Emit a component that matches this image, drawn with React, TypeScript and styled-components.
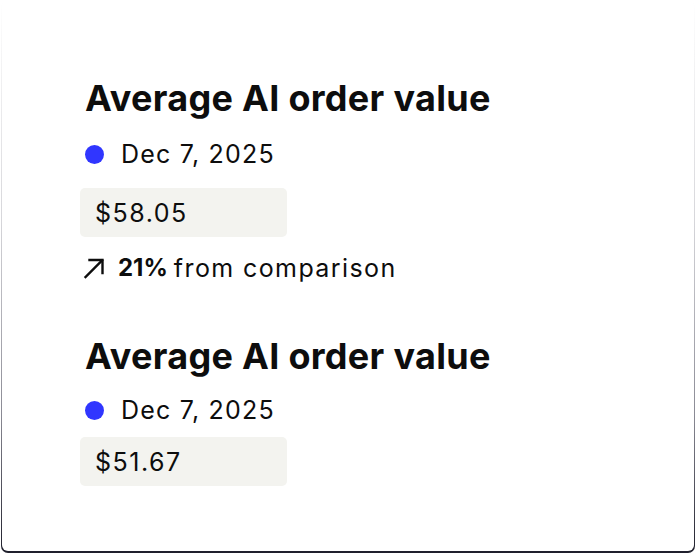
import React from "react";
import styled, { createGlobalStyle } from "styled-components";

const Global = createGlobalStyle`
  html, body { margin: 0; padding: 0; background: #ffffff; }
  body { font-family: Inter, "Noto Sans", sans-serif; color: #0d0d0d; }
`;

const Frame = styled.div`
  box-sizing: border-box;
  margin-left: 1px;
  width: 694px;
  height: 553px;
  padding: 0 1px 2px 1px;
  border-radius: 7px;
  background: linear-gradient(180deg, #ffffff 0%, #d6d6da 40%, #8a8a94 75%, #1f1f2c 100%);
`;

const Card = styled.div`
  box-sizing: border-box;
  height: 100%;
  background: #ffffff;
  border-radius: 6px;
  padding: 78px 0 0 83px;
  display: flex;
  flex-direction: column;
`;

const Block = styled.section<{ $gap?: number }>`
  display: flex;
  flex-direction: column;
  margin-bottom: ${(p) => p.$gap ?? 0}px;
`;

const Title = styled.h2`
  margin: 0;
  font-size: 36px;
  line-height: 40px;
  font-weight: 700;
  letter-spacing: 0.3px;
`;

const DateRow = styled.div<{ $top: number }>`
  display: flex;
  align-items: center;
  gap: 17px;
  margin-top: ${(p) => p.$top}px;
  font-size: 25px;
  line-height: 30px;
  letter-spacing: 1.2px;
`;

const Dot = styled.span`
  width: 19px;
  height: 19px;
  border-radius: 50%;
  background: #3036ff;
  flex: none;
`;

const ValueBox = styled.div<{ $top: number }>`
  box-sizing: border-box;
  margin-top: ${(p) => p.$top}px;
  margin-left: -5px;
  width: 207px;
  height: 49px;
  border-radius: 5px;
  background: #f3f3ef;
  padding-left: 15px;
  display: flex;
  align-items: center;
  font-size: 25px;
  letter-spacing: 1.5px;
`;

const Trend = styled.div`
  display: flex;
  align-items: center;
  margin-top: 16px;
  font-size: 25px;
  line-height: 30px;
  letter-spacing: 1.4px;
`;

const Arrow = styled.svg`
  width: 24px;
  height: 24px;
  margin-left: -3px;
  margin-right: 12px;
  flex: none;
`;

const Strong = styled.strong`
  font-weight: 700;
  font-size: 24px;
  letter-spacing: 0;
  margin-right: 6px;
`;

export default function App() {
  return (
    <>
      <Global />
      <Frame>
        <Card>
          <Block $gap={53}>
            <Title>Average AI order value</Title>
            <DateRow $top={21}>
              <Dot />
              <span>Dec 7, 2025</span>
            </DateRow>
            <ValueBox $top={19}>$58.05</ValueBox>
            <Trend>
              <Arrow viewBox="0 0 24 24" fill="none" stroke="#0d0d0d" strokeWidth="2.4" strokeLinecap="square">
                <path d="M3.5 21 L20 4.5" />
                <path d="M7.5 4 H20.5 V17" />
              </Arrow>
              <Strong>21%</Strong>
              <span>from comparison</span>
            </Trend>
          </Block>
          <Block>
            <Title>Average AI order value</Title>
            <DateRow $top={19}>
              <Dot />
              <span>Dec 7, 2025</span>
            </DateRow>
            <ValueBox $top={12}>$51.67</ValueBox>
          </Block>
        </Card>
      </Frame>
    </>
  );
}
